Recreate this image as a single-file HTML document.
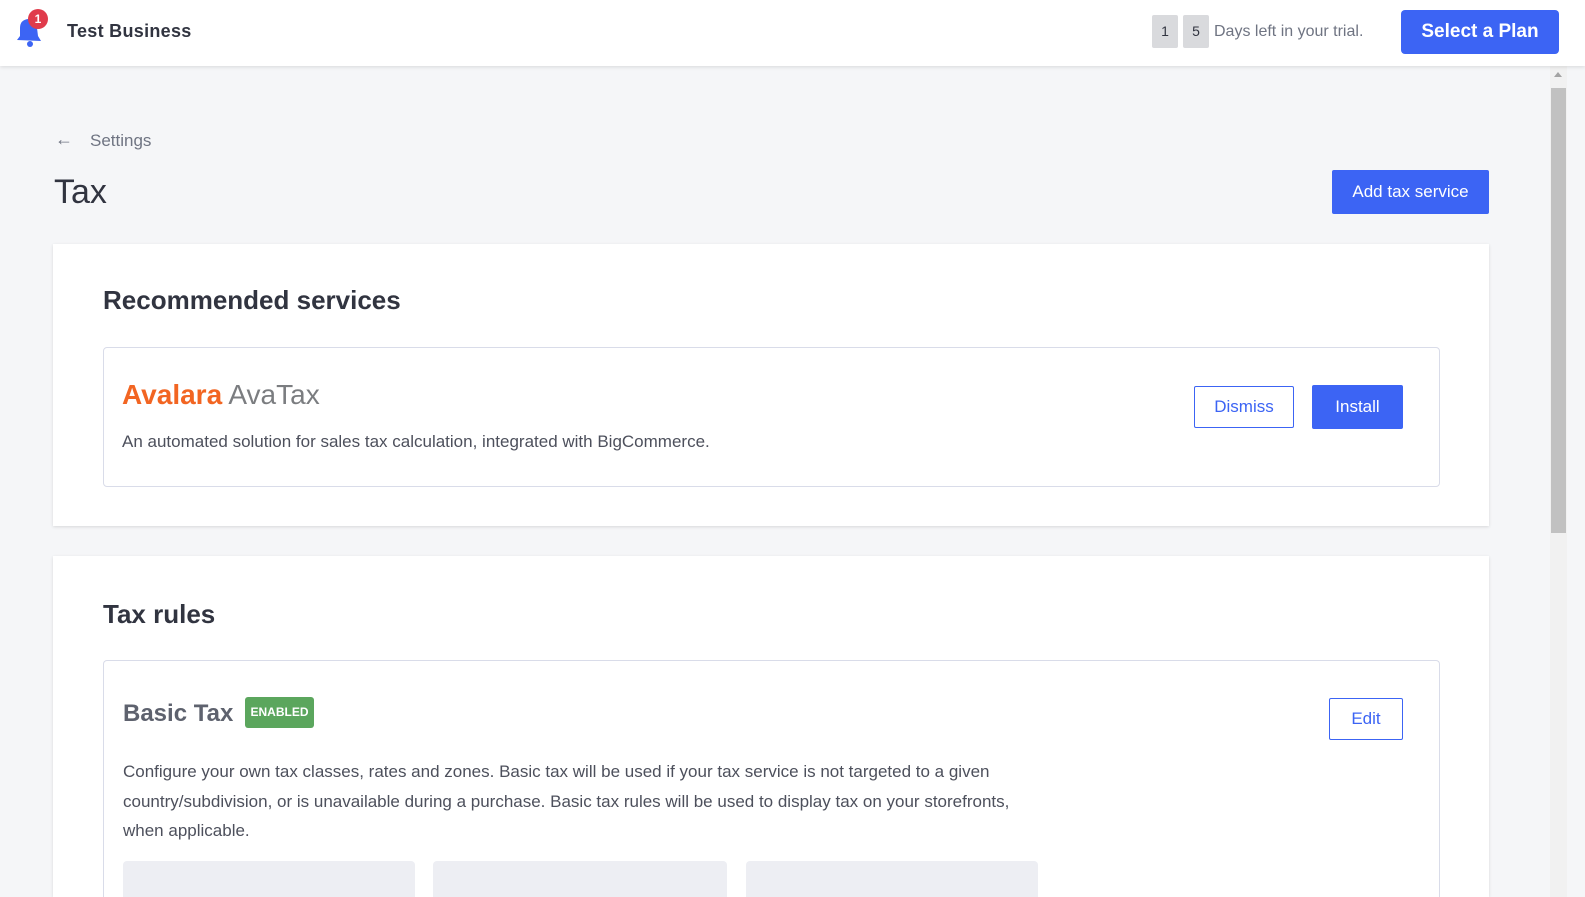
<!DOCTYPE html>
<html style="width:1585px;height:897px;overflow:hidden"><head><style>
*{box-sizing:border-box;margin:0;padding:0}
body{width:1585px;height:897px;overflow:hidden;background:#f5f6f8;font-family:"Liberation Sans",sans-serif;color:#313440;position:relative}
.top{position:absolute;left:0;top:0;width:1585px;height:66px;background:#fff;box-shadow:0 1px 4px rgba(0,0,0,.12);z-index:2}
.abs{position:absolute}
.card{position:absolute;background:#fff;box-shadow:0 1px 3px rgba(0,0,0,.12);overflow:hidden}
.inner{position:absolute;border:1px solid #d9dce9;border-radius:4px;background:#fff;overflow:hidden}
.btn{position:absolute;display:flex;align-items:center;justify-content:center;border-radius:4px;font-size:17px}
.blue{background:#3c64f4;color:#fff}
.out{border:1px solid #3c64f4;color:#3c64f4;background:#fff}
.gray{position:absolute;background:#edeef3;border-radius:4px 4px 0 0}
</style></head><body>
<div class="top">
<svg class="abs" style="left:13px;top:14px" width="32" height="36" viewBox="0 0 32 36"><path d="M4 26 L7 22 L7 14 Q7 6 15 5 Q23 6 24 14 L25 22 L28 27 Z" fill="#3c64f4"/><circle cx="17" cy="30" r="3" fill="#3c64f4"/></svg>
<div class="abs" style="left:28px;top:9px;width:20px;height:20px;border-radius:50%;background:#e03b4b;color:#fff;font-size:12px;font-weight:bold;text-align:center;line-height:20px">1</div>
<div class="abs" style="left:67px;top:21px;font-size:18px;font-weight:bold;color:#313440;letter-spacing:.3px">Test Business</div>
<div class="abs" style="left:1152px;top:15px;width:26px;height:33px;background:#d9dadd;border-radius:2px;font-size:14px;text-align:center;line-height:33px">1</div>
<div class="abs" style="left:1183px;top:15px;width:26px;height:33px;background:#d9dadd;border-radius:2px;font-size:14px;text-align:center;line-height:33px">5</div>
<div class="abs" style="left:1214px;top:23px;font-size:16px;color:#6f7482">Days left in your trial.</div>
<div class="btn blue" style="left:1401px;top:10px;width:158px;height:44px;font-size:19px;font-weight:bold">Select a Plan</div>
</div>
<div class="abs" style="left:1550px;top:66px;width:17px;height:831px;background:#f1f1f1"></div>
<div class="abs" style="left:1551px;top:88px;width:15px;height:445px;background:#c1c1c1"></div>
<div class="abs" style="left:1554px;top:72px;width:0;height:0;border-left:4px solid transparent;border-right:4px solid transparent;border-bottom:5px solid #a3a3a3"></div>

<div class="abs" style="left:55px;top:129px;font-size:18px;color:#6f7482">&#8592;</div>
<div class="abs" style="left:90px;top:131px;font-size:17px;color:#6f7482">Settings</div>
<div class="abs" style="left:54px;top:173px;font-size:34px;font-weight:300;color:#313440">Tax</div>
<div class="btn blue" style="left:1332px;top:170px;width:157px;height:44px;border-radius:2px">Add tax service</div>

<div class="card" style="left:53px;top:244px;width:1436px;height:282px">
<div class="abs" style="left:50px;top:41px;font-size:26px;font-weight:bold">Recommended services</div>
<div class="inner" style="left:50px;top:103px;width:1337px;height:140px">
<div class="abs" style="left:18px;top:31px;font-size:28px;white-space:nowrap"><span style="color:#f26522;font-weight:bold">Avalara</span> <span style="color:#7b7d80">AvaTax</span></div>
<div class="abs" style="left:18px;top:84px;font-size:17px;color:#4d505c">An automated solution for sales tax calculation, integrated with BigCommerce.</div>
<div class="btn out" style="left:1090px;top:38px;width:100px;height:42px;border-radius:2px">Dismiss</div>
<div class="btn blue" style="left:1208px;top:37px;width:91px;height:44px;border-radius:2px">Install</div>
</div>
</div>

<div class="card" style="left:53px;top:556px;width:1436px;height:341px">
<div class="abs" style="left:50px;top:43px;font-size:26px;font-weight:bold">Tax rules</div>
<div class="inner" style="left:50px;top:104px;width:1337px;height:237px;border-bottom:none;border-radius:4px 4px 0 0">
<div class="abs" style="left:19px;top:39px;font-size:24px;font-weight:bold;color:#5e626e">Basic Tax</div>
<div class="abs" style="left:141px;top:36px;width:69px;height:31px;background:#5ba65d;border-radius:3px;color:#fff;font-size:12px;font-weight:bold;text-align:center;line-height:31px">ENABLED</div>
<div class="abs" style="left:19px;top:96px;width:930px;font-size:17px;line-height:29.5px;color:#4d505c">Configure your own tax classes, rates and zones. Basic tax will be used if your tax service is not targeted to a given country/subdivision, or is unavailable during a purchase. Basic tax rules will be used to display tax on your storefronts, when applicable.</div>
<div class="btn out" style="left:1225px;top:37px;width:74px;height:42px;border-radius:2px">Edit</div>
<div class="gray" style="left:19px;top:200px;width:292px;height:36px"></div>
<div class="gray" style="left:329px;top:200px;width:294px;height:36px"></div>
<div class="gray" style="left:642px;top:200px;width:292px;height:36px"></div>
</div>
</div>
</body></html>
